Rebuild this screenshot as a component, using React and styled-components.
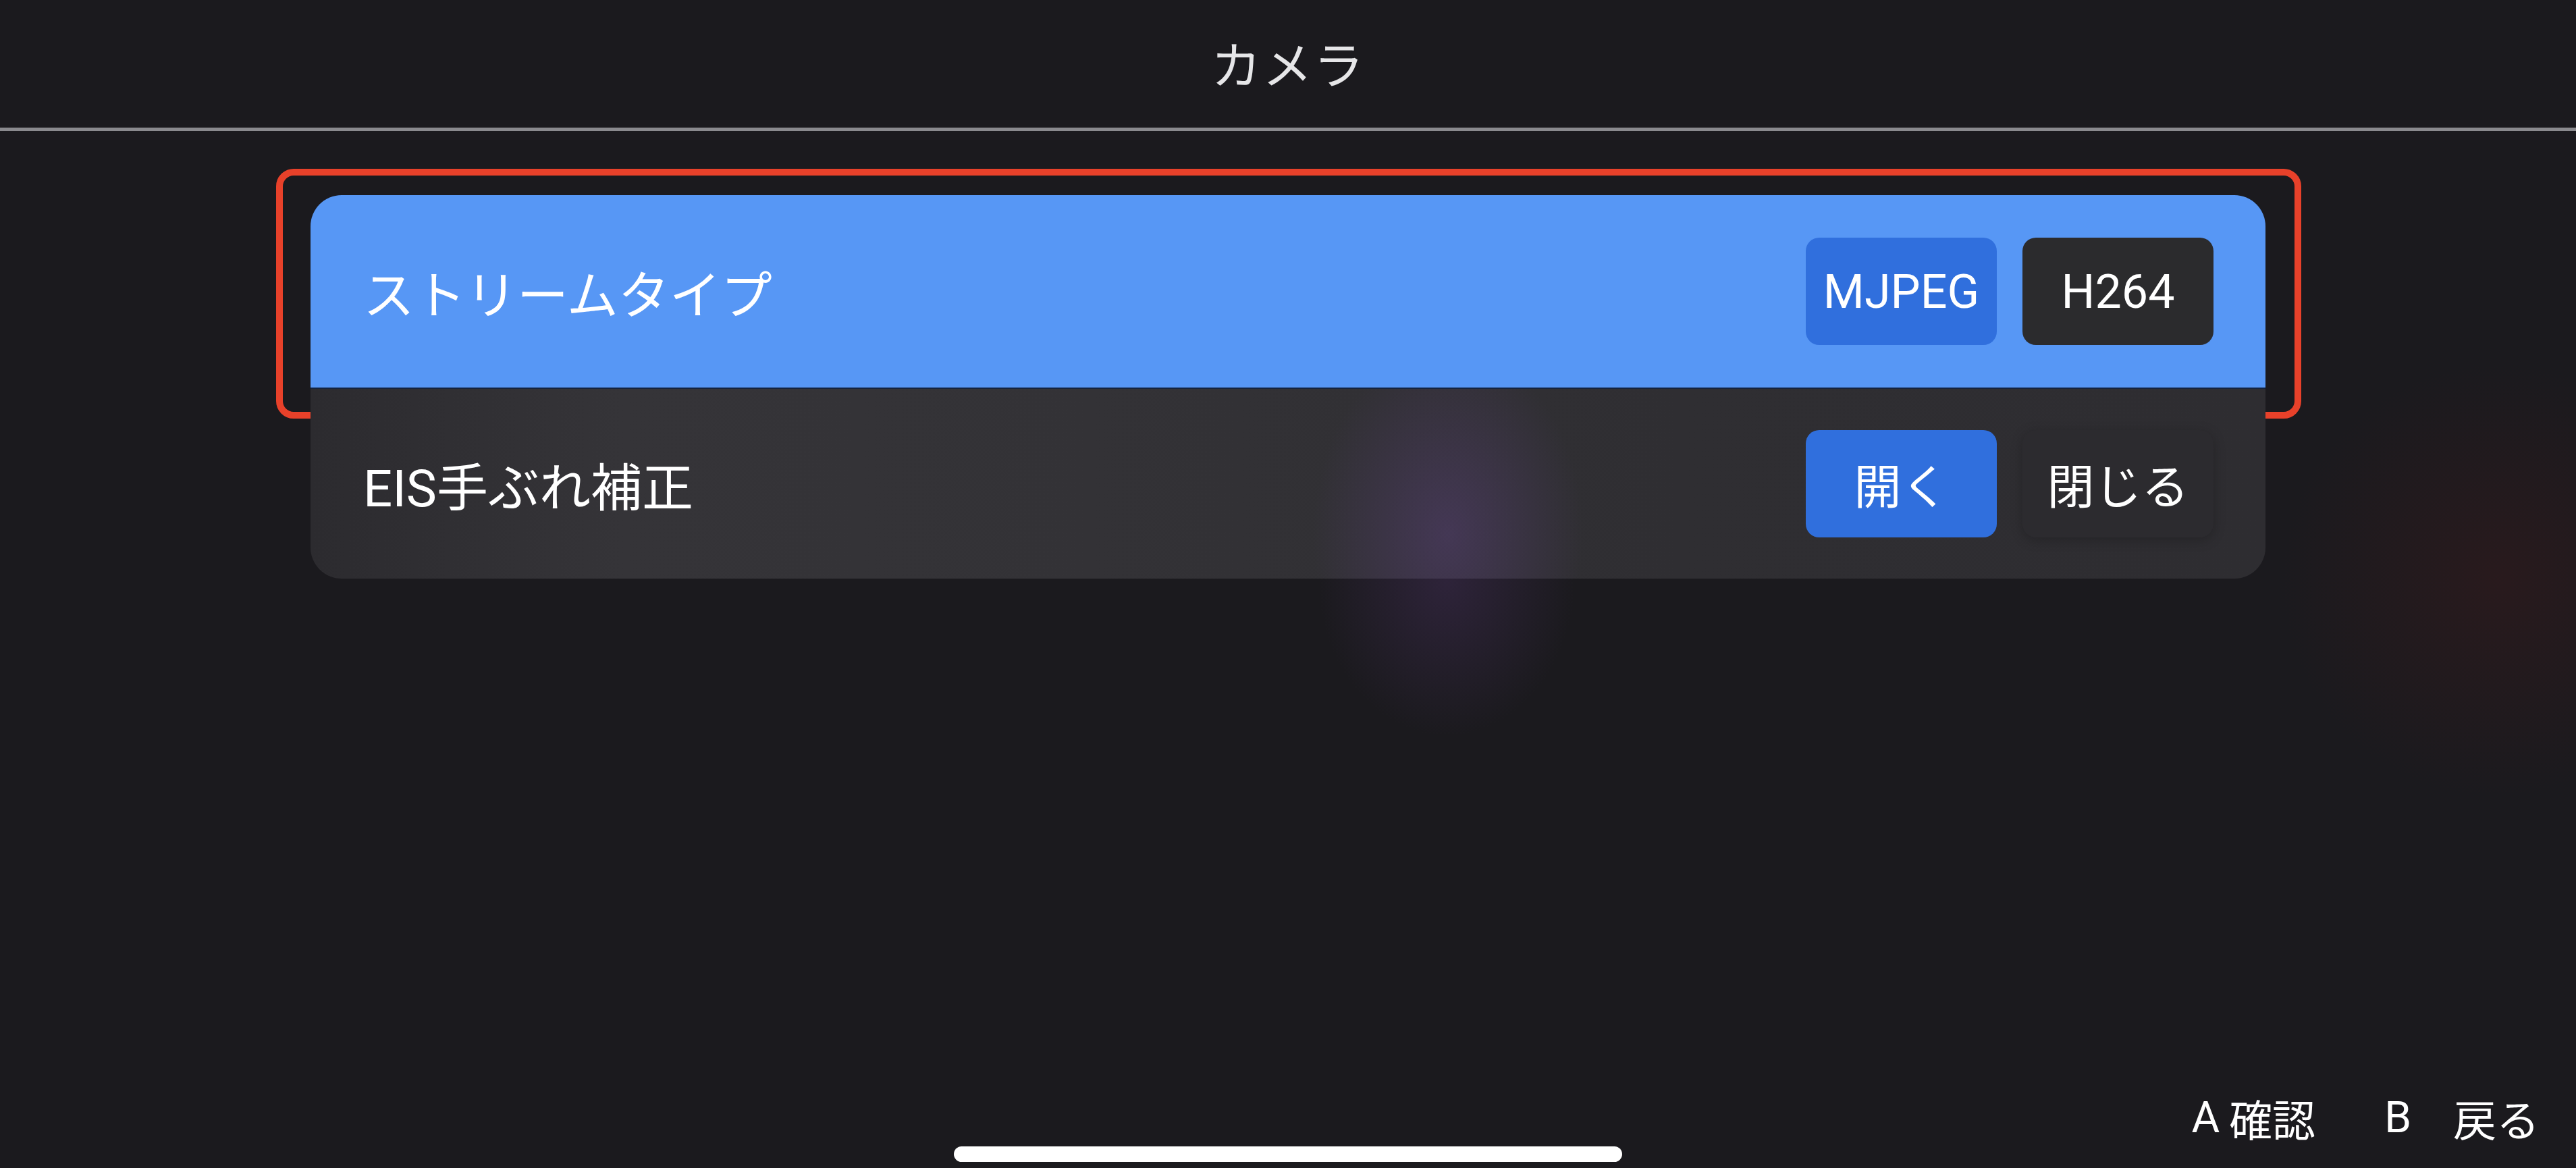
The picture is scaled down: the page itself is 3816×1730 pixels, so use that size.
import React, { useState } from 'react'
import styled, { createGlobalStyle } from 'styled-components'

const GlobalStyle = createGlobalStyle`
  html, body {
    margin: 0;
    padding: 0;
    background: #1b1a1e;
  }
  * { box-sizing: border-box; }
`

const Page = styled.div`
  width: 3816px;
  height: 1730px;
  overflow: hidden;
  display: flex;
  flex-direction: column;
  color: #ffffff;
  font-family: Roboto, "Noto Sans CJK JP", sans-serif;
  background:
    radial-gradient(ellipse 190px 230px at 2143px 860px, rgba(72, 48, 96, 0.42), transparent 100%),
    radial-gradient(ellipse 320px 320px at 3700px 860px, rgba(80, 26, 26, 0.26), transparent 100%),
    #1b1a1e;
`

const Header = styled.header`
  height: 189px;
  display: flex;
  align-items: center;
  justify-content: center;
`

const Title = styled.h1`
  margin: 0 0 6px;
  font-size: 74px;
  font-weight: 400;
  color: #e6e6e8;
  letter-spacing: 2px;
`

const Divider = styled.div`
  height: 5px;
  background: #8a8a8e;
`

const Main = styled.main`
  flex: 1;
  padding-top: 95px;
`

const Card = styled.section`
  width: 2896px;
  margin: 0 auto;
  display: flex;
  flex-direction: column;
`

const Row = styled.div`
  position: relative;
  height: ${p => p.$height}px;
  padding: 0 77px 0 78px;
  display: flex;
  align-items: center;
  justify-content: space-between;
  background: ${p => p.$focused
    ? '#5797f5'
    : `radial-gradient(ellipse 200px 280px at 1685px 215px, rgba(84, 62, 112, 0.55), transparent 100%),
       linear-gradient(90deg, #2c2b2f 0%, #353438 16%, #333236 40%, #2f2e32 70%, #2e2d31 100%)`};
  border-bottom: ${p => p.$focused ? '2px solid #14233f' : 'none'};
  &:first-child { border-radius: 46px 46px 0 0; }
  &:last-child { border-radius: 0 0 46px 46px; }
`

const FocusRing = styled.div`
  position: absolute;
  top: -39px;
  left: -51px;
  right: -53px;
  bottom: -46px;
  border: 10px solid #e8412a;
  border-radius: 26px;
  pointer-events: none;
`

const Label = styled.span`
  font-size: 76px;
  font-weight: 400;
  color: #ffffff;
`

const Options = styled.div`
  display: flex;
  gap: 38px;
`

const Option = styled.button`
  width: 283px;
  height: 159px;
  border: none;
  border-radius: 20px;
  font-family: inherit;
  font-size: 70px;
  font-weight: 400;
  color: #ffffff;
  background: ${p => p.$active ? '#306fdd' : p.$onBlue ? '#2b2b2d' : '#2c2b2f'};
  box-shadow: ${p => !p.$active && !p.$onBlue ? '0 4px 18px rgba(0, 0, 0, 0.22)' : 'none'};
  cursor: pointer;
`

const HintBar = styled.div`
  height: 80px;
  padding-right: 54px;
  display: flex;
  align-items: center;
  justify-content: flex-end;
  font-size: 64px;
  color: #ffffff;
`

const Hint = styled.span`
  display: flex;
  align-items: center;
  margin-left: ${p => p.$first ? 0 : 102}px;
`

const Key = styled.span`
  margin-right: ${p => p.$space}px;
`

const HomeIndicator = styled.div`
  width: 990px;
  height: 23px;
  margin: 3px auto 9px;
  border-radius: 12px;
  background: #ffffff;
`

const settings = [
  { id: 'stream', label: 'ストリームタイプ', options: ['MJPEG', 'H264'], value: 'MJPEG', height: 287 },
  { id: 'eis', label: 'EIS手ぶれ補正', options: ['開く', '閉じる'], value: '開く', height: 281 },
]

const App = () => {
  const [values, setValues] = useState(
    Object.fromEntries(settings.map(s => [s.id, s.value]))
  )
  const focused = 'stream'

  return (
    <Page>
      <GlobalStyle />
      <Header>
        <Title>カメラ</Title>
      </Header>
      <Divider />
      <Main>
        <Card>
          {settings.map(s => (
            <Row key={s.id} $height={s.height} $focused={s.id === focused}>
              <Label>{s.label}</Label>
              <Options>
                {s.options.map(o => (
                  <Option
                    key={o}
                    $active={values[s.id] === o}
                    $onBlue={s.id === focused}
                    onClick={() => setValues({ ...values, [s.id]: o })}
                  >
                    {o}
                  </Option>
                ))}
              </Options>
              {s.id === focused && <FocusRing />}
            </Row>
          ))}
        </Card>
      </Main>
      <HintBar>
        <Hint $first>
          <Key $space={14}>A</Key>確認
        </Hint>
        <Hint>
          <Key $space={62}>B</Key>戻る
        </Hint>
      </HintBar>
      <HomeIndicator />
    </Page>
  )
}

export default App
